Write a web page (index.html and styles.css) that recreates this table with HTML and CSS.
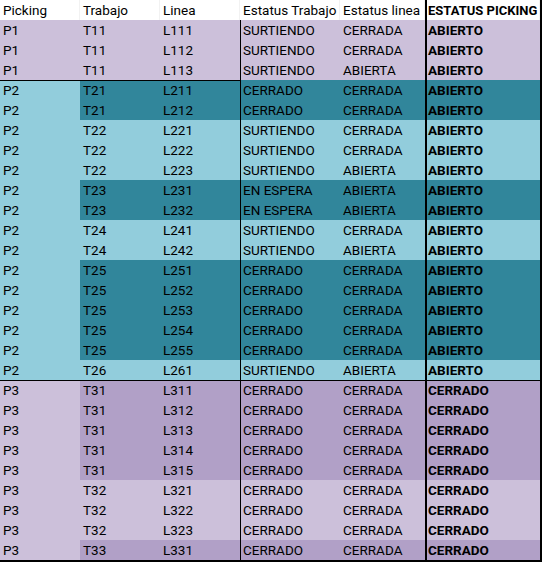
FILE: index.html
```html
<!DOCTYPE html>
<html lang="es">
<head>
<meta charset="utf-8">
<title>Estatus Picking</title>
<link rel="stylesheet" href="styles.css">
</head>
<body>
<div class="sheet">
  <div class="row head"><span class="c">Picking</span><span class="c">Trabajo</span><span class="c">Linea</span><span class="c et">Estatus Trabajo</span><span class="c">Estatus linea</span><span class="c st">ESTATUS PICKING</span></div>

  <div class="row p1 lt"><span class="c">P1</span><span class="c">T11</span><span class="c">L111</span><span class="c et">SURTIENDO</span><span class="c">CERRADA</span><span class="c st">ABIERTO</span></div>
  <div class="row p1 lt"><span class="c">P1</span><span class="c">T11</span><span class="c">L112</span><span class="c et">SURTIENDO</span><span class="c">CERRADA</span><span class="c st">ABIERTO</span></div>
  <div class="row p1 lt"><span class="c">P1</span><span class="c">T11</span><span class="c">L113</span><span class="c et">SURTIENDO</span><span class="c">ABIERTA</span><span class="c st">ABIERTO</span></div>

  <div class="row p2 dk gtop"><span class="c">P2</span><span class="c">T21</span><span class="c">L211</span><span class="c et">CERRADO</span><span class="c">CERRADA</span><span class="c st">ABIERTO</span></div>
  <div class="row p2 dk"><span class="c">P2</span><span class="c">T21</span><span class="c">L212</span><span class="c et">CERRADO</span><span class="c">CERRADA</span><span class="c st">ABIERTO</span></div>
  <div class="row p2 lt"><span class="c">P2</span><span class="c">T22</span><span class="c">L221</span><span class="c et">SURTIENDO</span><span class="c">CERRADA</span><span class="c st">ABIERTO</span></div>
  <div class="row p2 lt"><span class="c">P2</span><span class="c">T22</span><span class="c">L222</span><span class="c et">SURTIENDO</span><span class="c">CERRADA</span><span class="c st">ABIERTO</span></div>
  <div class="row p2 lt"><span class="c">P2</span><span class="c">T22</span><span class="c">L223</span><span class="c et">SURTIENDO</span><span class="c">ABIERTA</span><span class="c st">ABIERTO</span></div>
  <div class="row p2 dk"><span class="c">P2</span><span class="c">T23</span><span class="c">L231</span><span class="c et">EN ESPERA</span><span class="c">ABIERTA</span><span class="c st">ABIERTO</span></div>
  <div class="row p2 dk"><span class="c">P2</span><span class="c">T23</span><span class="c">L232</span><span class="c et">EN ESPERA</span><span class="c">ABIERTA</span><span class="c st">ABIERTO</span></div>
  <div class="row p2 lt"><span class="c">P2</span><span class="c">T24</span><span class="c">L241</span><span class="c et">SURTIENDO</span><span class="c">CERRADA</span><span class="c st">ABIERTO</span></div>
  <div class="row p2 lt"><span class="c">P2</span><span class="c">T24</span><span class="c">L242</span><span class="c et">SURTIENDO</span><span class="c">ABIERTA</span><span class="c st">ABIERTO</span></div>
  <div class="row p2 dk"><span class="c">P2</span><span class="c">T25</span><span class="c">L251</span><span class="c et">CERRADO</span><span class="c">CERRADA</span><span class="c st">ABIERTO</span></div>
  <div class="row p2 dk"><span class="c">P2</span><span class="c">T25</span><span class="c">L252</span><span class="c et">CERRADO</span><span class="c">CERRADA</span><span class="c st">ABIERTO</span></div>
  <div class="row p2 dk"><span class="c">P2</span><span class="c">T25</span><span class="c">L253</span><span class="c et">CERRADO</span><span class="c">CERRADA</span><span class="c st">ABIERTO</span></div>
  <div class="row p2 dk"><span class="c">P2</span><span class="c">T25</span><span class="c">L254</span><span class="c et">CERRADO</span><span class="c">CERRADA</span><span class="c st">ABIERTO</span></div>
  <div class="row p2 dk"><span class="c">P2</span><span class="c">T25</span><span class="c">L255</span><span class="c et">CERRADO</span><span class="c">CERRADA</span><span class="c st">ABIERTO</span></div>
  <div class="row p2 lt"><span class="c">P2</span><span class="c">T26</span><span class="c">L261</span><span class="c et">SURTIENDO</span><span class="c">ABIERTA</span><span class="c st">ABIERTO</span></div>

  <div class="row p3 dk gfull"><span class="c">P3</span><span class="c">T31</span><span class="c">L311</span><span class="c et">CERRADO</span><span class="c">CERRADA</span><span class="c st">CERRADO</span></div>
  <div class="row p3 dk"><span class="c">P3</span><span class="c">T31</span><span class="c">L312</span><span class="c et">CERRADO</span><span class="c">CERRADA</span><span class="c st">CERRADO</span></div>
  <div class="row p3 dk"><span class="c">P3</span><span class="c">T31</span><span class="c">L313</span><span class="c et">CERRADO</span><span class="c">CERRADA</span><span class="c st">CERRADO</span></div>
  <div class="row p3 dk"><span class="c">P3</span><span class="c">T31</span><span class="c">L314</span><span class="c et">CERRADO</span><span class="c">CERRADA</span><span class="c st">CERRADO</span></div>
  <div class="row p3 dk"><span class="c">P3</span><span class="c">T31</span><span class="c">L315</span><span class="c et">CERRADO</span><span class="c">CERRADA</span><span class="c st">CERRADO</span></div>
  <div class="row p3 lt"><span class="c">P3</span><span class="c">T32</span><span class="c">L321</span><span class="c et">CERRADO</span><span class="c">CERRADA</span><span class="c st">CERRADO</span></div>
  <div class="row p3 lt"><span class="c">P3</span><span class="c">T32</span><span class="c">L322</span><span class="c et">CERRADO</span><span class="c">CERRADA</span><span class="c st">CERRADO</span></div>
  <div class="row p3 lt"><span class="c">P3</span><span class="c">T32</span><span class="c">L323</span><span class="c et">CERRADO</span><span class="c">CERRADA</span><span class="c st">CERRADO</span></div>
  <div class="row p3 dk"><span class="c">P3</span><span class="c">T33</span><span class="c">L331</span><span class="c et">CERRADO</span><span class="c">CERRADA</span><span class="c st">CERRADO</span></div>
</div>
</body>
</html>
```

FILE: styles.css
```css
html, body {
  margin: 0;
  padding: 0;
  background: #ffffff;
}

.sheet {
  width: 542px;
  font-family: Roboto, "Liberation Sans", sans-serif;
  font-size: 13.5px;
  color: #000000;
  border-bottom: 2px solid #000000;
}

.row {
  display: grid;
  grid-template-columns: 80px 80px 80px 100px 85px 117px;
  height: 20px;
}

.c {
  box-sizing: border-box;
  padding-left: 3px;
  line-height: 21px;
  white-space: nowrap;
  overflow: hidden;
}

.c.st {
  border-left: 2px solid #000000;
  border-right: 2px solid #000000;
  padding-left: 1px;
  font-weight: 700;
}

.head .c.st {
  font-size: 13px;
}

.row:not(.head) .c.et {
  border-left: 1px solid #000000;
  padding-left: 2px;
}

.head .c {
  background: #ffffff;
  box-shadow: inset -1px 0 0 #f2f2f2;
}

/* colours */
.p1 .c,
.p3 .c { background: #ccc0da; }
.p3.dk .c:not(:first-child) { background: #b1a0c7; }

.p2 .c { background: #92cddc; }
.p2.dk .c:not(:first-child) { background: #31869b; }

/* group separators */
.gtop .c:nth-child(-n+3) { box-shadow: inset 0 1px 0 #000000; }
.gfull .c { box-shadow: inset 0 1px 0 #000000; }
```
